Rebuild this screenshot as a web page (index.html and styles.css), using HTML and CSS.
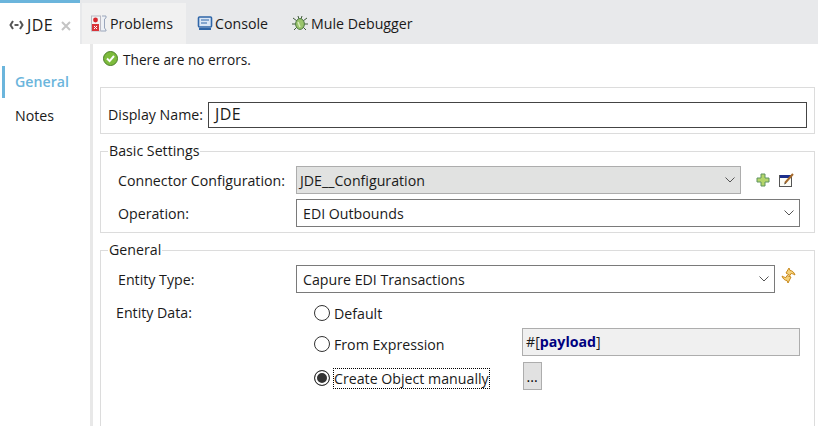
FILE: index.html
```html
<!DOCTYPE html>
<html lang="en">
<head>
    <meta charset="UTF-8">
    <title>JDE</title>
    <link rel="stylesheet" href="styles.css">
</head>
<body>
    <div class="tabs">
        <div class="tab tab-active">
            <svg class="ico-conn" width="15" height="10" viewBox="0 0 15 10"><path d="M4 1 1.500 5 4 9M11 1l2.500 4L11 9" fill="none" stroke="#555" stroke-width="2"/><path d="M5.500 5h4" stroke="#333" stroke-width="1.600"/></svg>
            <span class="jde">JDE</span>
            <svg class="ico-close" width="10" height="10" viewBox="0 0 10 10"><path d="M1 1l8 8M9 1l-8 8" stroke="#c4c4c4" stroke-width="2"/></svg>
        </div>
        <div class="tab tab-problems">
            <svg width="16" height="17" viewBox="0 0 16 17"><rect x=".5" y="1" width="9" height="15" fill="#f3f3f3" stroke="#b9b9c4"/><circle cx="4.500" cy="5" r="2.400" fill="#d8262c"/><rect x="1" y="9" width="7" height="7" fill="#d8343a"/><path d="M3 11l3 3M6 11l-3 3" stroke="#fff"/><path d="M11 1h4v2l-1.500 1v9l1.500 2v1h-5" fill="#eef1f6" stroke="#9aa6bb"/></svg>
            <span>Problems</span>
        </div>
        <div class="tab tab-console">
            <svg width="16" height="15" viewBox="0 0 16 15"><rect x="1.500" y="1" width="13" height="10" rx="1" fill="#dbe7f6" stroke="#2f66a8" stroke-width="1.600"/><path d="M4 4h8M4 7h6" stroke="#2f66a8"/><path d="M2 13h12" stroke="#2f66a8" stroke-width="2"/></svg>
            <span>Console</span>
        </div>
        <div class="tab tab-debug">
            <svg width="18" height="17" viewBox="0 0 18 17"><path d="M2 3l4 3M16 3l-4 3M1 9h4M17 9h-4M3 15l3-3M15 15l-3-3M7 1l1 3M11 1l-1 3" stroke="#3f5a3a" fill="none"/><ellipse cx="9" cy="9" rx="4.400" ry="5.400" fill="#9ac46c" stroke="#4f7a45"/><path d="M7 7l2 5" stroke="#d9ecbd" stroke-width="1.400"/></svg>
            <span>Mule Debugger</span>
        </div>
    </div>

    <div class="main">
        <div class="side">
            <div class="side-item side-active">General</div>
            <div class="side-item">Notes</div>
        </div>

        <div class="content">
            <div class="status">
                <svg width="15" height="15" viewBox="0 0 15 15"><circle cx="7.500" cy="7.500" r="7" fill="#7dbb3c" stroke="#4c7f2a"/><path d="M4 7.500l2.600 2.600L11 5" fill="none" stroke="#fff" stroke-width="2"/></svg>
                <span>There are no errors.</span>
            </div>

            <div class="box name-box">
                <label class="name-label">Display Name:</label>
                <div class="name-input"><span class="jde">JDE</span></div>
            </div>

            <fieldset class="group basic">
                <legend>Basic Settings</legend>
                <div class="row">
                    <label class="row-label">Connector Configuration:</label>
                    <div class="combo combo-grey combo-conf">
                        <span>JDE__Configuration</span>
                        <svg class="chev" width="10" height="6" viewBox="0 0 10 6"><path d="M.5.5 5 5 9.500.5" fill="none" stroke="#555"/></svg>
                    </div>
                    <svg class="ico-plus" width="14" height="14" viewBox="0 0 14 14"><path d="M5 1h4v4h4v4H9v4H5V9H1V5h4z" fill="#b4d56a" stroke="#5e9360"/></svg>
                    <svg class="ico-edit" width="16" height="14" viewBox="0 0 16 14"><rect x=".5" y="2.500" width="12" height="11" fill="#fdfdf6" stroke="#555"/><rect x="1" y="2" width="11" height="3" fill="#1c2f8c"/><path d="M6 10l8-9" stroke="#a5692a" stroke-width="2"/><path d="M5 11.500l1-2 1 1z" fill="#333"/></svg>
                </div>
                <div class="row">
                    <label class="row-label">Operation:</label>
                    <div class="combo combo-op">
                        <span>EDI Outbounds</span>
                        <svg class="chev" width="10" height="6" viewBox="0 0 10 6"><path d="M.5.5 5 5 9.500.5" fill="none" stroke="#555"/></svg>
                    </div>
                </div>
            </fieldset>

            <fieldset class="group general">
                <legend>General</legend>
                <div class="row">
                    <label class="row-label">Entity Type:</label>
                    <div class="combo combo-type">
                        <span>Capure EDI Transactions</span>
                        <svg class="chev" width="10" height="6" viewBox="0 0 10 6"><path d="M.5.5 5 5 9.500.5" fill="none" stroke="#555"/></svg>
                    </div>
                    <svg class="ico-sync" width="15" height="17" viewBox="0 0 15 17"><path d="M5 6l3-5 1 2.500c2 0 4 1.500 5 4.500-1.500-1-3-1.500-4-1.500L9 8.500z" fill="#f6d27a" stroke="#c98a1d"/><path d="M10 10l-3 6-1-2.500c-2 0-4-1.500-5-4.500 1.500 1 3 1.500 4 1.500L6 8.500z" fill="#f6d27a" stroke="#c98a1d"/></svg>
                </div>
                <div class="entity">
                    <label class="entity-label">Entity Data:</label>
                    <div class="options">
                        <div class="option option-default">
                            <span class="radio"></span>
                            <span>Default</span>
                        </div>
                        <div class="option option-expr">
                            <span class="radio"></span>
                            <span class="option-text">From Expression</span>
                            <div class="expr">#[<b>payload</b>]</div>
                        </div>
                        <div class="option option-manual">
                            <span class="radio radio-on"></span>
                            <span class="option-text focused">Create Object manually</span>
                            <button class="dots" type="button">...</button>
                        </div>
                    </div>
                </div>
            </fieldset>
        </div>
    </div>
</body>
</html>
```

FILE: styles.css
```css
html, body {
    margin: 0;
    padding: 0;
    height: 426px;
    overflow: hidden;
}

body {
    font-family: "Open Sans", "Noto Sans", sans-serif;
    font-size: 14.2px;
    color: #1a1a1a;
    background-color: #fff;
}

.jde {
    font-size: 16px;
    letter-spacing: 0.4px;
}

.tabs {
    display: flex;
    height: 44px;
    background-color: #e8e9eb;
}

.tab {
    display: flex;
    align-items: center;
    gap: 3px;
    box-sizing: border-box;
    padding-top: 3px;
}

.tab-active {
    width: 80px;
    padding: 2px 0 0 9px;
    background-color: #fff;
    border-top: 3px solid #6bb5dc;
}

.ico-close {
    margin-left: 5px;
    margin-top: 2px;
}

.tab-problems {
    width: 104px;
    margin: 3px 0 0 2px;
    padding: 0 0 0 9px;
    background-color: #f1f1f1;
}

.tab-console {
    padding-left: 11px;
    gap: 2px;
}

.tab-debug {
    padding-left: 23px;
    gap: 2px;
}

.main {
    display: flex;
    height: 382px;
}

.side {
    width: 93px;
    padding: 22px 0 0 2px;
    box-sizing: border-box;
    border-right: 3px solid #e8e8e8;
}

.side-item {
    height: 32px;
    line-height: 32px;
    padding-left: 13px;
    margin-bottom: 2px;
}

.side-active {
    padding-left: 10px;
    border-left: 3px solid #6bb5dc;
    color: #6bb5dc;
    font-weight: 600;
}

.content {
    flex: 1;
    padding: 0 3px 0 7px;
}

.status {
    display: flex;
    align-items: center;
    gap: 5px;
    height: 31px;
    margin-left: 3px;
    font-size: 13.7px;
}

.status svg {
    margin-top: -2px;
}

.box {
    box-sizing: border-box;
    border: 1px solid #dcdcdc;
    margin-top: 12px;
}

.name-box {
    display: flex;
    align-items: center;
    height: 47px;
    padding: 8px 7px 0 7px;
}

.name-label {
    width: 100px;
    flex: none;
}

.name-input {
    flex: 1;
    box-sizing: border-box;
    height: 26px;
    line-height: 23px;
    padding-left: 6px;
    border: 1px solid #444;
}

.group {
    margin: 7px 0 0;
    padding: 5px 0 0 17px;
    min-width: 0;
    box-sizing: border-box;
    border: 1px solid #dcdcdc;
}

.group legend {
    padding: 0 1px;
    margin-left: -10px;
    line-height: 20px;
}

.basic {
    height: 92px;
}

.general {
    height: 200px;
}

.row {
    display: flex;
    align-items: center;
    height: 28px;
    margin-bottom: 5px;
}

.row-label {
    width: 178px;
    flex: none;
}

.combo {
    display: flex;
    align-items: center;
    justify-content: space-between;
    box-sizing: border-box;
    height: 28px;
    padding: 0 5px 0 6px;
    border: 1px solid #7a7a7a;
}

.combo-grey {
    padding-left: 3px;
    background-color: #e1e2e1;
    border-color: #adadad;
}

.combo-conf {
    width: 445px;
}

.combo-op {
    width: 504px;
}

.combo-type {
    width: 479px;
}

.ico-plus {
    margin-left: 15px;
}

.ico-edit {
    margin-left: 9px;
}

.ico-sync {
    margin: 0 0 8px 6px;
}

.entity {
    display: flex;
    margin-top: 7px;
}

.entity-label {
    width: 198px;
    flex: none;
    margin-left: -2px;
    line-height: 26px;
}

.option {
    display: flex;
    align-items: center;
}

.option-default {
    height: 26px;
}

.option-expr {
    height: 28px;
    margin-top: 4px;
}

.option-manual {
    height: 28px;
    margin-top: 6px;
}

.radio {
    box-sizing: border-box;
    width: 16px;
    height: 16px;
    margin-right: 4px;
    border: 1px solid #333;
    border-radius: 50%;
    background-color: #fff;
}

.radio-on {
    background-color: #333;
    box-shadow: inset 0 0 0 2px #fff;
}

.option-text {
    width: 188px;
}

.focused {
    width: auto;
    outline: 1px dotted #000;
    margin-right: 34px;
}

.expr {
    box-sizing: border-box;
    width: 278px;
    height: 28px;
    line-height: 26px;
    margin-bottom: 4px;
    padding-left: 3px;
    background-color: #f0f0f0;
    border: 1px solid #adadad;
}

.expr b {
    color: #00007f;
}

.dots {
    width: 19px;
    height: 28px;
    margin-bottom: 4px;
    padding: 0;
    font: inherit;
    background-color: #e1e1e1;
    border: 1px solid #adadad;
}
```
